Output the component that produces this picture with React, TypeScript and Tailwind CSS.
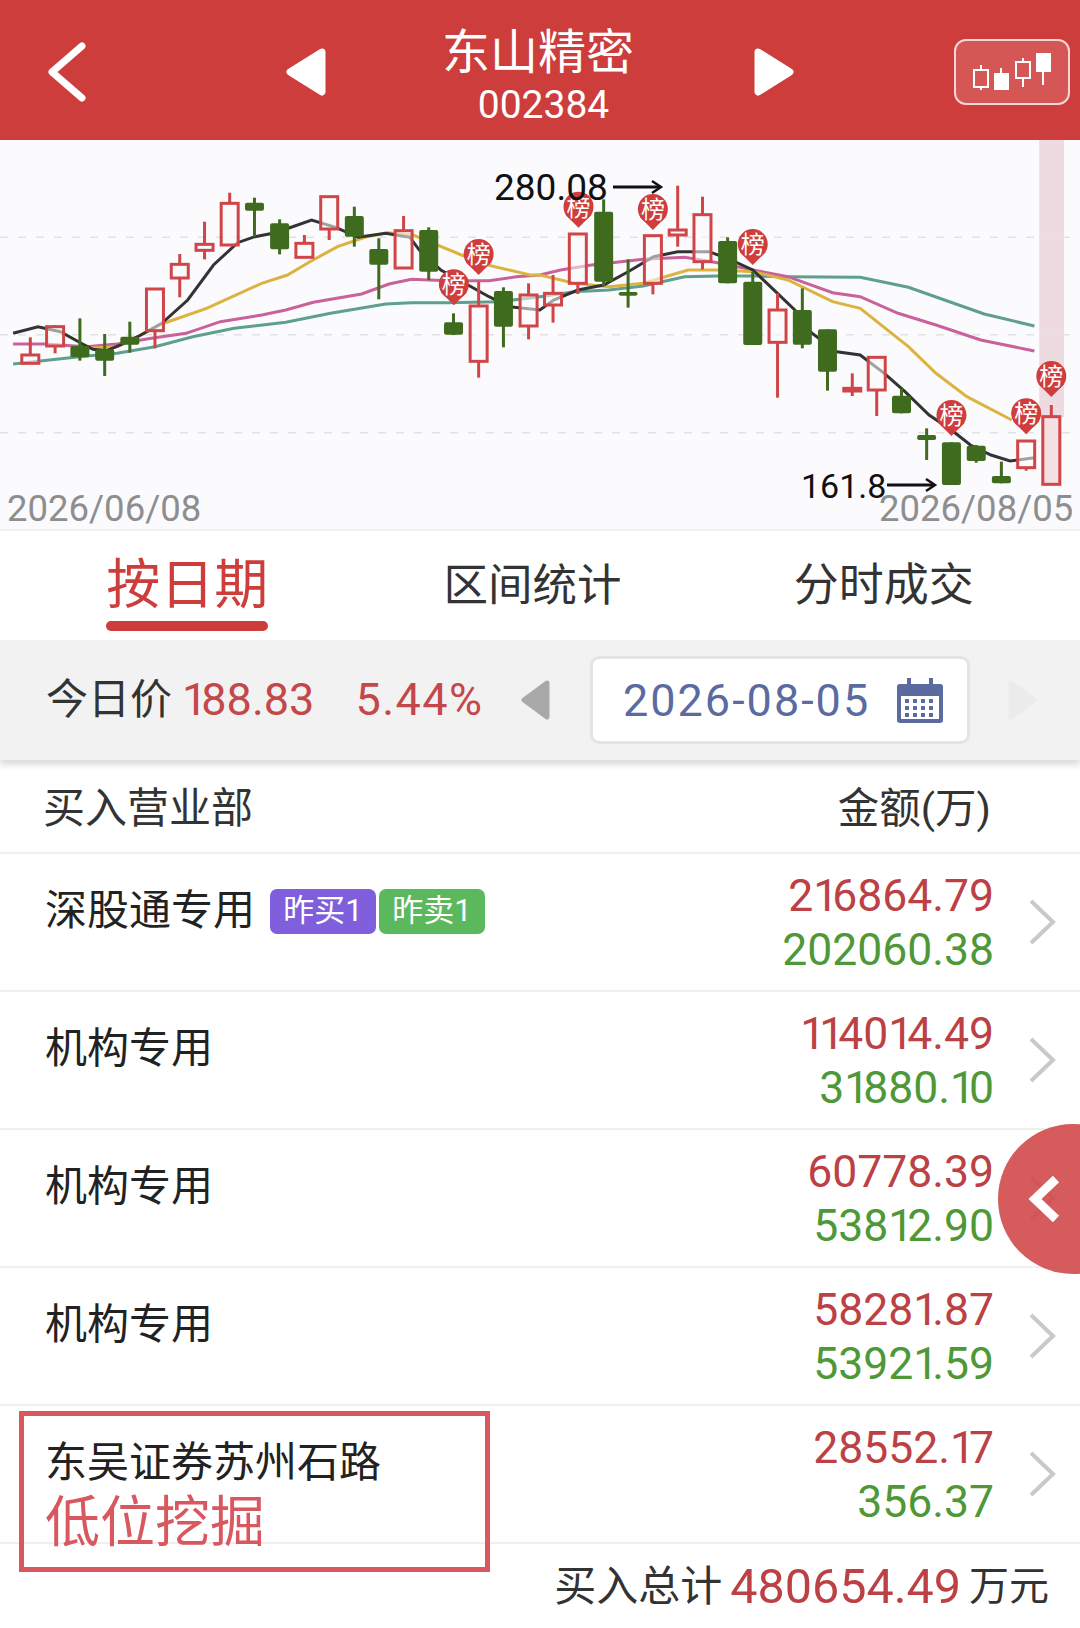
import React from "react";

const sx = 1 / 2.904;
const sy = 1 / 3;
const X = (x: number) => x * sx;
const Y = (y: number) => y * sy;
const R = 1568;

type C = [number, number, number, number, number, "r" | "g"];
const candles: C[] = [
  [88, 592, 672, 645, 670, "r"], [160, 555, 640, 560, 618, "r"], [232, 535, 662, 618, 652, "g"],
  [304, 582, 708, 628, 662, "g"], [377, 545, 638, 590, 614, "g"], [450, 447, 625, 447, 572, "r"],
  [522, 342, 472, 373, 414, "r"], [594, 245, 358, 313, 331, "r"], [667, 158, 318, 190, 315, "r"],
  [739, 173, 290, 188, 212, "g"], [812, 238, 343, 250, 328, "g"], [884, 285, 352, 310, 352, "r"],
  [956, 170, 300, 170, 267, "r"], [1029, 200, 320, 228, 290, "g"], [1100, 295, 478, 327, 374, "g"],
  [1172, 228, 385, 272, 384, "r"], [1245, 262, 420, 270, 395, "g"], [1317, 520, 585, 547, 584, "g"],
  [1390, 425, 713, 498, 664, "r"], [1462, 442, 622, 453, 560, "g"], [1535, 430, 598, 465, 558, "r"],
  [R + 38, 405, 548, 460, 495, "r"], [R + 110, 282, 462, 282, 430, "r"], [R + 185, 178, 438, 215, 425, "g"],
  [R + 256, 358, 503, 456, 467, "g"], [R + 328, 287, 463, 287, 430, "r"], [R + 400, 137, 320, 270, 285, "r"],
  [R + 472, 170, 388, 224, 365, "r"], [R + 545, 292, 430, 303, 430, "g"], [R + 618, 395, 615, 425, 615, "g"],
  [R + 690, 460, 773, 510, 607, "r"], [R + 762, 445, 625, 510, 614, "g"], [R + 835, 568, 752, 568, 695, "g"],
  [R + 907, 700, 768, 745, 753, "r"], [R + 978, 652, 828, 652, 750, "r"], [R + 1050, 745, 820, 767, 820, "g"],
  [R + 1123, 865, 960, 885, 900, "g"], [R + 1195, 907, 1035, 907, 1035, "g"], [R + 1267, 915, 968, 917, 963, "g"],
  [R + 1340, 965, 1030, 1008, 1030, "g"], [R + 1412, 903, 992, 903, 983, "r"], [R + 1485, 795, 1033, 830, 1033, "r"],
];

const path = (a: number[][], b: number[][]) =>
  [...a, ...b.map(([x, y]) => [x + R, y])].map(([x, y]) => `${X(x).toFixed(1)},${Y(y).toFixed(1)}`).join(" ");

const black = path(
  [[38, 580], [110, 560], [175, 575], [240, 612], [270, 628], [310, 632], [350, 615], [400, 590], [470, 550], [545, 480], [620, 375], [690, 308], [740, 290], [800, 278], [905, 240], [975, 262], [1040, 292], [1120, 280], [1190, 292], [1225, 340], [1280, 390], [1350, 430], [1420, 470], [1480, 500]],
  [[0, 510], [40, 480], [110, 450], [185, 435], [256, 395], [330, 350], [400, 335], [490, 335], [545, 355], [618, 390], [690, 460], [740, 510], [790, 580], [862, 635], [930, 645], [1000, 700], [1060, 755], [1130, 825], [1195, 870], [1250, 915], [1310, 945], [1365, 963], [1436, 953]]
);
const yellow = path(
  [[250, 625], [340, 620], [400, 590], [470, 552], [600, 505], [760, 430], [835, 405], [900, 365], [980, 320], [1060, 292], [1125, 278], [1200, 285], [1340, 345], [1425, 377], [1540, 405]],
  [[0, 405], [100, 430], [200, 440], [300, 430], [430, 390], [520, 390], [620, 395], [720, 420], [850, 485], [930, 505], [1070, 620], [1150, 700], [1240, 770], [1370, 840]]
);
const pink = path(
  [[38, 612], [130, 612], [250, 620], [340, 612], [440, 595], [540, 580], [640, 545], [760, 525], [830, 510], [910, 487], [1050, 462], [1130, 432], [1195, 418], [1300, 422], [1420, 422], [1500, 410]],
  [[0, 405], [60, 390], [150, 375], [300, 358], [420, 352], [500, 365], [620, 390], [720, 410], [850, 458], [930, 470], [1040, 520], [1150, 555], [1280, 600], [1436, 633]]
);
const teal = path(
  [[38, 672], [230, 650], [340, 640], [450, 620], [560, 590], [680, 565], [830, 547], [960, 520], [1120, 492], [1195, 488], [1300, 488], [1450, 485]],
  [[0, 470], [100, 455], [200, 450], [300, 438], [420, 410], [520, 408], [620, 408], [720, 410], [930, 412], [1070, 442], [1290, 522], [1436, 558]]
);

const pins: [number, number][] = [
  [1390, 342], [1318, 433], [R + 112, 200], [R + 328, 207], [R + 618, 312], [R + 1195, 825], [R + 1412, 820], [R + 1485, 708],
];

function Chart() {
  return (
    <svg viewBox="0 0 1080 390" className="block w-[1080px] h-[390px]">
      <rect x={X(R + 1450)} y="0" width={X(72)} height={Y(832)} fill="#eddbe1" />
      {[292, 584, 878].map((y) => (
        <line key={y} x1="0" x2="1080" y1={Y(y)} y2={Y(y)} stroke="#e2e2e2" strokeWidth="1.5" strokeDasharray="8 10" />
      ))}
      <polyline points={teal} fill="none" stroke="#5f9f8e" strokeWidth="3" />
      <polyline points={pink} fill="none" stroke="#c9629a" strokeWidth="3" />
      <polyline points={yellow} fill="none" stroke="#dcb340" strokeWidth="3" />
      <polyline points={black} fill="none" stroke="#333333" strokeWidth="3" />
      {candles.map(([x, wt, wb, bt, bb, c], i) => {
        const cx = X(x);
        if (c === "g") {
          return (
            <g key={i}>
              <line x1={cx} x2={cx} y1={Y(wt)} y2={Y(wb)} stroke="#3f6b1e" strokeWidth="3" />
              <rect x={cx - 9.5} y={Y(bt)} width="19" height={Y(bb - bt)} rx="2" fill="#3f6b1e" />
            </g>
          );
        }
        return (
          <g key={i}>
            <line x1={cx} x2={cx} y1={Y(wt)} y2={Y(bt)} stroke="#cf4548" strokeWidth="3" />
            <line x1={cx} x2={cx} y1={Y(bb)} y2={Y(wb)} stroke="#cf4548" strokeWidth="3" />
            <rect
              x={cx - 8.5}
              y={Y(bt)}
              width="17"
              height={Y(bb - bt)}
              fill={i === candles.length - 1 ? "#f3dfe4" : "#fbfbfe"}
              fillOpacity={i === candles.length - 1 ? 1 : 0.55}
              stroke="#cf4548"
              strokeWidth="3"
            />
          </g>
        );
      })}
      {pins.map(([x, y], i) => {
        const cx = X(x);
        const cy = Y(y);
        return (
          <g key={i}>
            <path d={`M${cx - 13} ${cy + 8} L${cx} ${cy + 21} L${cx + 13} ${cy + 8} Z`} fill="#cf3d3d" />
            <circle cx={cx} cy={cy} r="15" fill="#cf3d3d" />
            <text x={cx} y={cy + 9} textAnchor="middle" fontSize="24" fill="#ffffff">榜</text>
          </g>
        );
      })}
      <text x="494" y="60" fontSize="37" fill="#111111">280.08</text>
      <line x1="613" x2="660" y1="47" y2="47" stroke="#111111" strokeWidth="3" />
      <path d="M652 41 L661 47 L652 53" fill="none" stroke="#111111" strokeWidth="2.5" />
      <text x="801" y="358" fontSize="34" fill="#111111">161.8</text>
      <line x1="887" x2="934" y1="345" y2="345" stroke="#111111" strokeWidth="3" />
      <path d="M926 339 L935 345 L926 351" fill="none" stroke="#111111" strokeWidth="2.5" />
      <text x="7" y="381" fontSize="36.5" fill="#8e8e8e">2026/06/08</text>
      <text x="879" y="381" fontSize="36.5" fill="#8e8e8e">2026/08/05</text>
    </svg>
  );
}

function Chevron() {
  return (
    <svg viewBox="0 0 28 48" className="w-[28px] h-[48px]">
      <path d="M3 3 L25 24 L3 45" fill="none" stroke="#c9c9c9" strokeWidth="4" />
    </svg>
  );
}

// The reference's numerals have a much narrower "1" than Roboto's.
function Num({ v }: { v: string }) {
  return (
    <>
      {v.split("").map((c, i) =>
        c === "1" ? (
          <span key={i} className="tracking-[-6px]">1</span>
        ) : (
          <span key={i}>{c}</span>
        )
      )}
    </>
  );
}

function Row({ name, buy, sell, badges }: { name: string; buy: string; sell: string; badges?: boolean }) {
  return (
    <div className="flex h-[138px] border-b-2 border-[#efefef]">
      <div className="flex-1 flex items-start gap-[15px] pl-[45px] pt-[32px]">
        <span className="text-[42px] leading-[50px] text-[#222222]">{name}</span>
        {badges && (
          <div className="flex gap-[3px] mt-[3px]">
            <span className="w-[106px] h-[45px] rounded-[7px] bg-[#7f5fdc] text-white text-[31px] leading-[44px] text-center">昨买1</span>
            <span className="w-[106px] h-[45px] rounded-[7px] bg-[#5cb85c] text-white text-[31px] leading-[44px] text-center">昨卖1</span>
          </div>
        )}
      </div>
      <div className="pt-[15px] text-right text-[44.5px] leading-[54px]">
        <div className="text-[#bb4145]"><Num v={buy} /></div>
        <div className="text-[#4e9838]"><Num v={sell} /></div>
      </div>
      <div className="w-[86px] pl-[34px] flex items-center">
        <Chevron />
      </div>
    </div>
  );
}

export default function App() {
  return (
    <div className="relative w-[1080px] h-[1628px] overflow-hidden bg-white font-['Roboto','Noto_Sans_CJK_SC',sans-serif]">
      <header className="relative h-[140px] bg-[#cc3d3b] text-white">
        <div className="flex h-full items-center pl-[46px] pr-[10px]">
          <svg viewBox="0 0 42 60" className="w-[42px] h-[60px] shrink-0 mt-[4px]">
            <path d="M36 4 L6 30 L36 56" fill="none" stroke="#ffffff" strokeWidth="7" strokeLinecap="round" strokeLinejoin="round" />
          </svg>
          <svg viewBox="0 0 44 50" className="w-[44px] h-[50px] shrink-0 ml-[196px] mt-[4px]">
            <path d="M38 5 L6 25 L38 45 Z" fill="#ffffff" stroke="#ffffff" strokeWidth="7" strokeLinejoin="round" />
          </svg>
          <div className="w-[424px] shrink-0 flex flex-col items-center mt-[10px]">
            <span className="text-[48px] leading-[58px] mr-[4px]">东山精密</span>
            <span className="text-[39px] leading-[44px] mt-[1px] ml-[7px]">002384</span>
          </div>
          <svg viewBox="0 0 44 50" className="w-[44px] h-[50px] shrink-0 mt-[4px]">
            <path d="M6 5 L38 25 L6 45 Z" fill="#ffffff" stroke="#ffffff" strokeWidth="7" strokeLinejoin="round" />
          </svg>
          <div className="ml-auto w-[116px] h-[66px] mt-[4px] rounded-[12px] border-2 border-[#f3d6d5] bg-[#d45755] flex items-center justify-center">
            <svg viewBox="0 0 96 48" className="w-[96px] h-[48px]">
              <g stroke="#ffffff" fill="none" strokeWidth="2">
                <rect x="10" y="22" width="14" height="17" />
                <line x1="17" x2="17" y1="17" y2="22" />
                <line x1="17" x2="17" y1="39" y2="42" />
                <rect x="52" y="14" width="14" height="16" />
                <line x1="59" x2="59" y1="10" y2="14" />
                <line x1="59" x2="59" y1="30" y2="39" />
                <line x1="37" x2="37" y1="20" y2="26" />
                <line x1="79" x2="79" y1="23" y2="37" />
              </g>
              <rect x="30" y="25" width="15" height="17" fill="#ffffff" />
              <rect x="72" y="5" width="15" height="19" fill="#ffffff" />
            </svg>
          </div>
        </div>
      </header>

      <section className="bg-[#fbfbfe] border-b-2 border-[#f0f0f0] h-[391px]">
        <Chart />
      </section>

      <nav className="grid grid-cols-3 h-[109px] pl-[13px] pr-[22px] bg-white">
        <div className="flex flex-col items-center pt-[23px]">
          <span className="text-[54px] leading-[63px] text-[#cc3d3b]">按日期</span>
          <span className="mt-[4px] w-[162px] h-[10px] rounded-full bg-[#cc3d3b]" />
        </div>
        <div className="flex justify-center pt-[28px] pr-[6px]">
          <span className="text-[44.5px] leading-[54px] text-[#333333]">区间统计</span>
        </div>
        <div className="flex justify-center pt-[28px]">
          <span className="text-[45px] leading-[54px] text-[#333333]">分时成交</span>
        </div>
      </nav>

      <div className="relative z-10 h-[120px] bg-[#f2f2f2] flex items-center pl-[46px] shadow-[0_5px_6px_rgba(0,0,0,0.14)]">
        <div className="w-[474px] shrink-0 flex items-center">
          <span className="text-[42px] leading-[50px] text-[#333333]">今日价</span>
          <span className="ml-[10px] text-[45px] leading-[50px] text-[#c4474a]"><Num v="188.83" /></span>
          <span className="ml-[41px] text-[45px] leading-[50px] tracking-[1.5px] text-[#c4474a]">5.44%</span>
        </div>
        <svg viewBox="0 0 31 42" className="w-[31px] h-[42px]">
          <path d="M27 4 L4 21 L27 38 Z" fill="#a9a9a9" stroke="#a9a9a9" strokeWidth="5" strokeLinejoin="round" />
        </svg>
        <div className="ml-[39px] w-[380px] h-[88px] shrink-0 rounded-[9px] bg-white border-[3px] border-[#e4e4e4] flex items-center pl-[30px] pt-[2px]">
          <span className="text-[45px] leading-[50px] tracking-[2px] text-[#5b6b9f] whitespace-nowrap">2026-08-05</span>
          <svg viewBox="0 0 48 46" className="ml-[26px] w-[48px] h-[46px] shrink-0">
            <rect x="1" y="6" width="46" height="39" rx="3" fill="#5b6b9f" />
            <rect x="5" y="18" width="38" height="23" fill="#ffffff" />
            <rect x="11" y="0" width="4" height="12" fill="#5b6b9f" />
            <rect x="33" y="0" width="4" height="12" fill="#5b6b9f" />
            {[9, 17, 25, 33].flatMap((x) =>
              [21, 28, 35].map((y) => <rect key={`${x}-${y}`} x={x} y={y} width="4" height="4" fill="#5b6b9f" />)
            )}
          </svg>
        </div>
        <svg viewBox="0 0 31 42" className="ml-[37px] w-[31px] h-[42px]">
          <path d="M4 4 L27 21 L4 38 Z" fill="#ebebeb" stroke="#ebebeb" strokeWidth="5" strokeLinejoin="round" />
        </svg>
      </div>

      <div className="flex items-center justify-between h-[94px] border-b-2 border-[#efefef] pl-[43px] pr-[89px] pt-[6px]">
        <span className="text-[42px] leading-[50px] text-[#333333]">买入营业部</span>
        <span className="text-[41.5px] leading-[50px] text-[#333333]">金额(万)</span>
      </div>

      <Row name="深股通专用" buy="216864.79" sell="202060.38" badges />
      <Row name="机构专用" buy="114014.49" sell="31880.10" />
      <Row name="机构专用" buy="60778.39" sell="53812.90" />
      <Row name="机构专用" buy="58281.87" sell="53921.59" />
      <Row name="东吴证券苏州石路" buy="28552.17" sell="356.37" />

      <div className="flex items-center justify-end h-[85px] pr-[31px] text-[#333333]">
        <span className="text-[42px] leading-[50px]">买入总计</span>
        <span className="mx-[8px] text-[48.5px] leading-[56px] text-[#bb4145]">480654.49</span>
        <span className="text-[40px] leading-[50px]">万元</span>
      </div>

      <div className="absolute z-20 left-[19px] top-[1411px] w-[471px] h-[161px] border-[5px] border-[#d9575f]">
        <span className="absolute left-[21px] top-[71px] text-[55px] leading-[70px] text-[#d9575f]">低位挖掘</span>
      </div>

      <div className="absolute z-20 left-[998px] top-[1124px] w-[150px] h-[150px] rounded-full bg-[#d2494b]/90 flex items-center pl-[30px]">
        <svg viewBox="0 0 32 48" className="w-[32px] h-[48px]">
          <path d="M28 4 L7 24 L28 44" fill="none" stroke="#ffffff" strokeWidth="9" />
        </svg>
      </div>
    </div>
  );
}
